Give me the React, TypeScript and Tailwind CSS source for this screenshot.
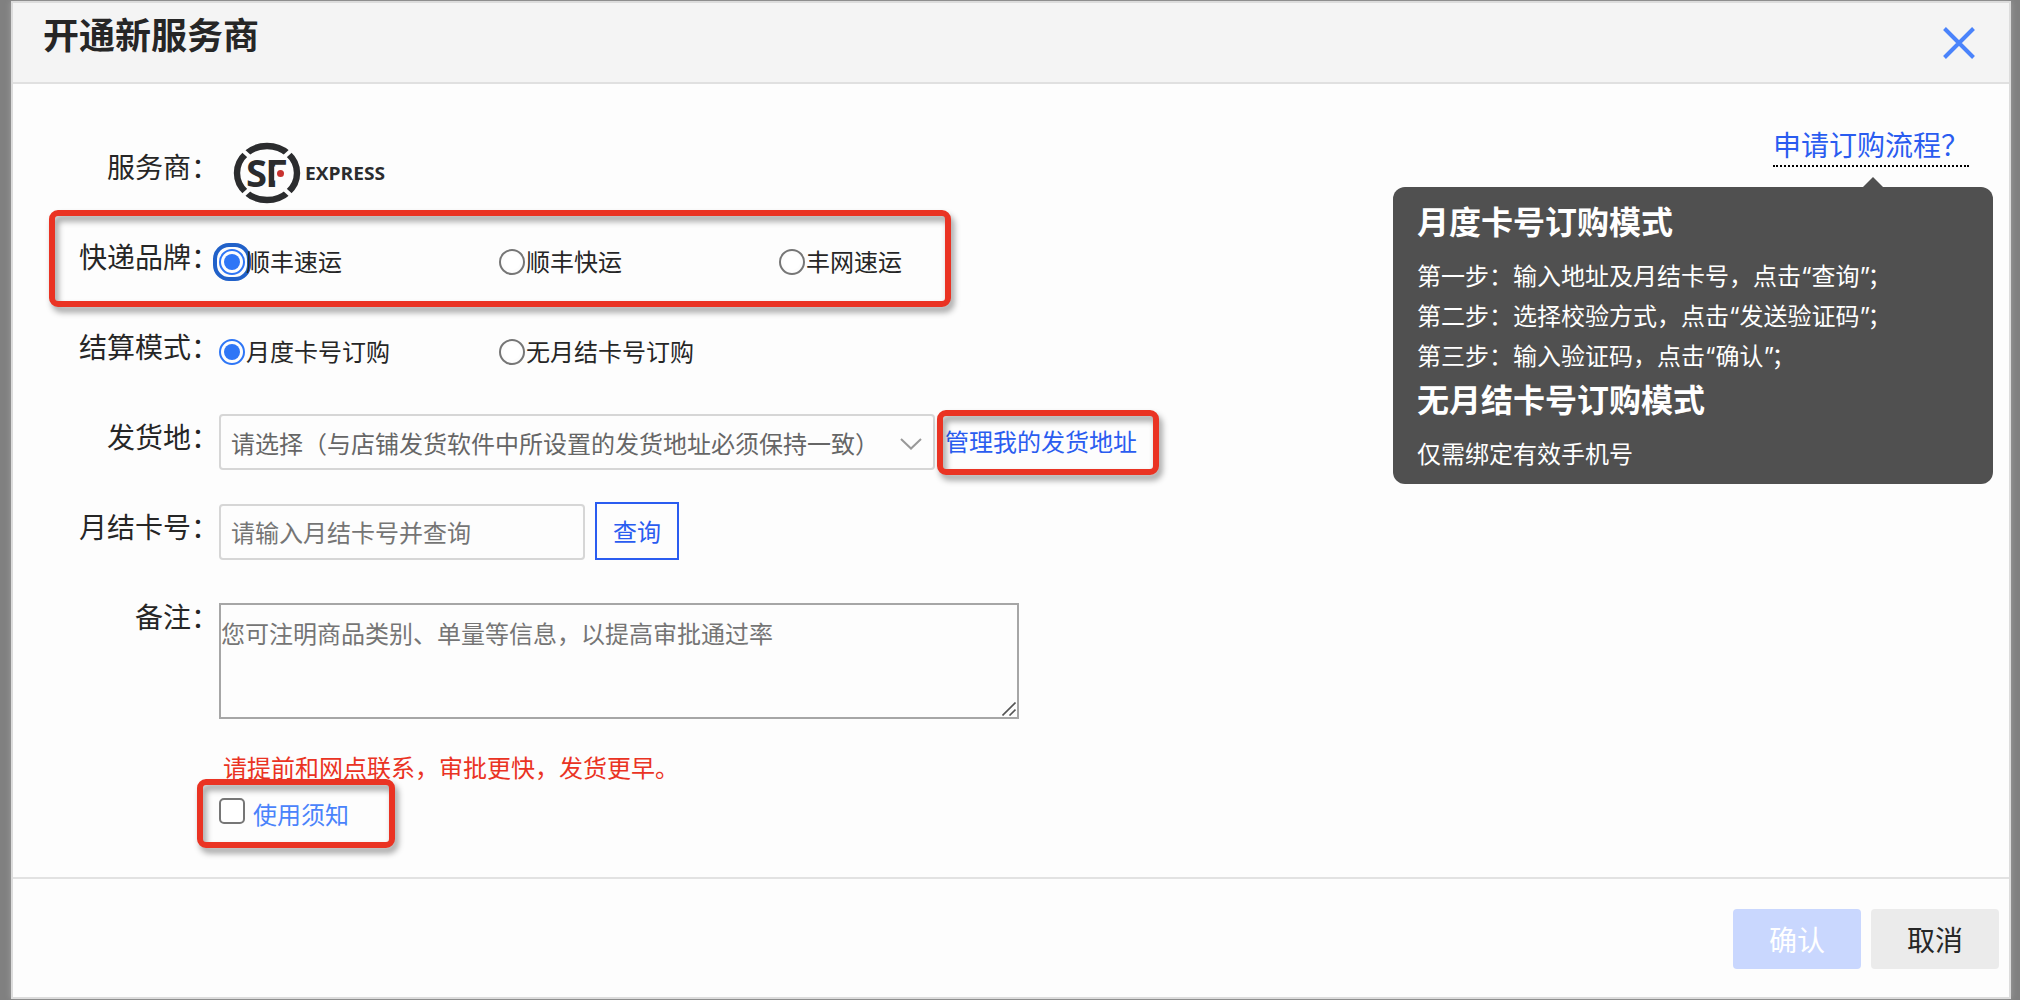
import React, { useState } from "react";

type RadioProps = {
  name: string;
  label: string;
  checked: boolean;
  focused?: boolean;
  onChange: () => void;
};

function Radio({ name, label, checked, focused, onChange }: RadioProps) {
  return (
    <label className="flex w-[280px] items-start text-[24px] leading-[36px]">
      <span
        className={
          focused
            ? "mx-[-6px] flex shrink-0 rounded-[16px] border-[4px] border-[#2161c9] p-[2px]"
            : "mt-[6px] flex shrink-0"
        }
      >
        <input
          type="radio"
          name={name}
          checked={checked}
          onChange={onChange}
          className="m-0 h-[26px] w-[26px] appearance-none rounded-full border-2 border-[#767676] bg-white bg-clip-content p-[3px] outline-none checked:border-[#2e76f6] checked:bg-[#2e76f6]"
        />
      </span>
      <span className="relative pl-px whitespace-nowrap">{label}</span>
    </label>
  );
}

type RowProps = {
  label: string;
  children: React.ReactNode;
};

function Row({ label, children }: RowProps) {
  return (
    <div className="flex h-[90px] items-start">
      <div className="w-[206px] shrink-0 pt-[8px] text-right text-[28px] leading-[40px] whitespace-nowrap">
        {label}：
      </div>
      {children}
    </div>
  );
}

// Red marker frame around the important fields
function Marker({ className }: { className: string }) {
  return (
    <div
      className={`pointer-events-none absolute rounded-[9px] border-[6px] border-[#ea3323] drop-shadow-[3px_5px_3px_rgba(0,0,0,0.4)] ${className}`}
    />
  );
}

function SfLogo() {
  return (
    <svg width="160" height="64" viewBox="0 0 160 64" className="block">
      <ellipse cx="34" cy="32" rx="30" ry="27" fill="none" stroke="#2b2c2e" strokeWidth="6.4" />
      <g stroke="#fdfdfd" strokeWidth="4">
        <path d="M6 6L17 16M62 6L51 16M6 58L17 48M62 58L51 48" />
      </g>
      <text x="13" y="46" fontFamily="Open Sans, sans-serif" fontWeight="700" fontSize="38" fill="#2b2c2e" textLength="21" lengthAdjust="spacingAndGlyphs">
        S
      </text>
      <text x="32" y="46" fontFamily="Open Sans, sans-serif" fontWeight="700" fontSize="38" fill="#2b2c2e" textLength="23" lengthAdjust="spacingAndGlyphs">
        F
      </text>
      <rect x="41.2" y="25.5" width="14" height="14" fill="#fdfdfd" />
      <circle cx="47.5" cy="32.5" r="3.5" fill="#c8322f" />
      <text x="72" y="38.5" fontFamily="Open Sans, sans-serif" fontWeight="700" fontSize="18" fill="#2b2c2e" textLength="80" lengthAdjust="spacingAndGlyphs">
        EXPRESS
      </text>
    </svg>
  );
}

function Quoted({ children }: { children: React.ReactNode }) {
  return (
    <>
      <span className="inline-block w-[10.5px] text-center leading-none font-['Inter']">“</span>
      {children}
      <span className="inline-block w-[8px] text-center leading-none font-['Inter']">”</span>
    </>
  );
}

const brands = ["顺丰速运", "顺丰快运", "丰网速运"];
const modes = ["月度卡号订购", "无月结卡号订购"];

export default function App() {
  const [brand, setBrand] = useState(brands[0]);
  const [mode, setMode] = useState(modes[0]);

  return (
    <div className="h-[1000px] w-[2020px] overflow-hidden bg-[#808080] pt-px pl-[11px] font-['Noto_Sans_CJK_SC',sans-serif] text-[#262626]">
      <div className="relative flex h-[998px] w-[2000px] flex-col border-2 border-[#dcdcdc] bg-[#fdfdfd] shadow-[0_0_6px_rgba(255,255,255,0.25)]">
        {/* Header */}
        <header className="flex h-[81px] shrink-0 items-start justify-between border-b-2 border-[#e0e0e0] bg-[#f4f4f4] pr-[34px] pl-[30px]">
          <h1 className="pt-[4px] text-[36px] leading-[52px] font-bold">开通新服务商</h1>
          <button className="mt-[24px]" aria-label="关闭">
            <svg width="32" height="32" viewBox="0 0 32 32" fill="none" stroke="#4a83fb" strokeWidth="4">
              <path d="M1.5 1.5L30.5 30.5M30.5 1.5L1.5 30.5" />
            </svg>
          </button>
        </header>

        {/* Body */}
        <div className="flex flex-1 justify-between pt-[54px]">
          <div>
            <Row label="服务商">
              <div className="pt-[3px] pl-[14px]">
                <SfLogo />
              </div>
            </Row>

            <Row label="快递品牌">
              <div className="flex pt-[15px]">
                {brands.map((b) => (
                  <Radio key={b} name="brand" label={b} checked={brand === b} focused={brand === b} onChange={() => setBrand(b)} />
                ))}
              </div>
            </Row>

            <Row label="结算模式">
              <div className="flex pt-[15px]">
                {modes.map((m) => (
                  <Radio key={m} name="mode" label={m} checked={mode === m} onChange={() => setMode(m)} />
                ))}
              </div>
            </Row>

            <Row label="发货地">
              <div className="mt-[6px] flex h-[56px] w-[716px] items-center justify-between rounded-[4px] border-2 border-[#d6d6d6] pr-[11px] pl-[10px] text-[24px] text-[#666]">
                <span className="pt-px whitespace-nowrap">请选择（与店铺发货软件中所设置的发货地址必须保持一致）</span>
                <svg width="22" height="12" viewBox="0 0 22 12" fill="none" stroke="#999" strokeWidth="2" className="mt-[3px]">
                  <path d="M1 1L11 10.5L21 1" />
                </svg>
              </div>
              <a className="pt-[15px] pl-[10px] text-[24px] leading-[36px] whitespace-nowrap text-[#2a5cf0]">管理我的发货地址</a>
            </Row>

            <Row label="月结卡号">
              <input
                className="mt-[6px] h-[56px] w-[366px] rounded-[4px] border-2 border-[#d6d6d6] bg-transparent px-[10px] pb-[2px] text-[24px] placeholder:text-[#757575]"
                placeholder="请输入月结卡号并查询"
              />
              <button className="mt-[4px] ml-[10px] h-[58px] w-[84px] border-2 border-[#2a5cf0] text-[24px] text-[#2a5cf0]">查询</button>
            </Row>

            <div className="flex">
              <div className="w-[206px] shrink-0 pt-[8px] text-right text-[28px] leading-[40px]">备注：</div>
              <div className="pt-[15px]">
                <div className="relative">
                  <textarea
                    className="block h-[116px] w-[800px] resize-none border-2 border-[#a6a6a6] bg-transparent px-0 pt-[10px] text-[24px] leading-[36px] placeholder:text-[#757575]"
                    placeholder="您可注明商品类别、单量等信息，以提高审批通过率"
                  />
                  <svg className="absolute right-[3px] bottom-[3px]" width="14" height="14" viewBox="0 0 14 14" stroke="#555" strokeWidth="1.6">
                    <path d="M0.5 13.5L13.5 0.5M7.5 13.5L13.5 7.5" />
                  </svg>
                </div>
                <p className="pt-[30px] pl-[4px] text-[24px] leading-[36px] text-[#ea3323]">请提前和网点联系，审批更快，发货更早。</p>
                <label className="flex items-start pt-[11px] text-[24px] leading-[36px]">
                  <input type="checkbox" className="mt-[2px] mr-[8px] h-[26px] w-[26px] appearance-none rounded-[5px] border-2 border-[#767676] bg-white" />
                  <span className="text-[#4a83fb]">使用须知</span>
                </label>
              </div>
            </div>
          </div>

          {/* Help link with its popover */}
          <div className="mr-[16px] flex w-[600px] flex-col items-end">
            <a className="-mt-[20px] mr-[24px] h-[49px] w-[196px] border-b-2 border-dotted border-black pt-[6px] text-[28px] leading-[40px] whitespace-nowrap text-[#2a5cf0]">
              申请订购流程？
            </a>
            <div className="mt-[10px] mr-[110px] h-0 w-0 border-x-[10px] border-b-[10px] border-x-transparent border-b-[#505050]" />
            <div className="h-[297px] w-full rounded-[12px] bg-[#505050] pt-[9px] pl-[24px] text-white">
              <h2 className="text-[32px] leading-[48px] font-bold">月度卡号订购模式</h2>
              <div className="pt-[11px] text-[24px] leading-[40px]">
                <p className="h-[40px]">第一步：输入地址及月结卡号，点击<Quoted>查询</Quoted>；</p>
                <p className="h-[40px]">第二步：选择校验方式，点击<Quoted>发送验证码</Quoted>；</p>
                <p className="h-[40px]">第三步：输入验证码，点击<Quoted>确认</Quoted>；</p>
              </div>
              <h2 className="-mt-px text-[32px] leading-[48px] font-bold">无月结卡号订购模式</h2>
              <p className="pt-[11px] text-[24px] leading-[40px]">仅需绑定有效手机号</p>
            </div>
          </div>
        </div>

        {/* Footer */}
        <footer className="flex h-[120px] shrink-0 justify-end gap-[10px] border-t-2 border-[#e2e2e2] pt-[30px] pr-[10px] text-[28px]">
          <button className="h-[60px] w-[128px] rounded-[4px] bg-[#c9d7fe] text-white">确认</button>
          <button className="h-[60px] w-[128px] rounded-[4px] bg-[#ebebeb]">取消</button>
        </footer>

        <Marker className="top-[207px] left-[36px] h-[97px] w-[902px]" />
        <Marker className="top-[407px] left-[924px] h-[65px] w-[222px]" />
        <Marker className="top-[776px] left-[184px] h-[69px] w-[198px]" />
      </div>
    </div>
  );
}
